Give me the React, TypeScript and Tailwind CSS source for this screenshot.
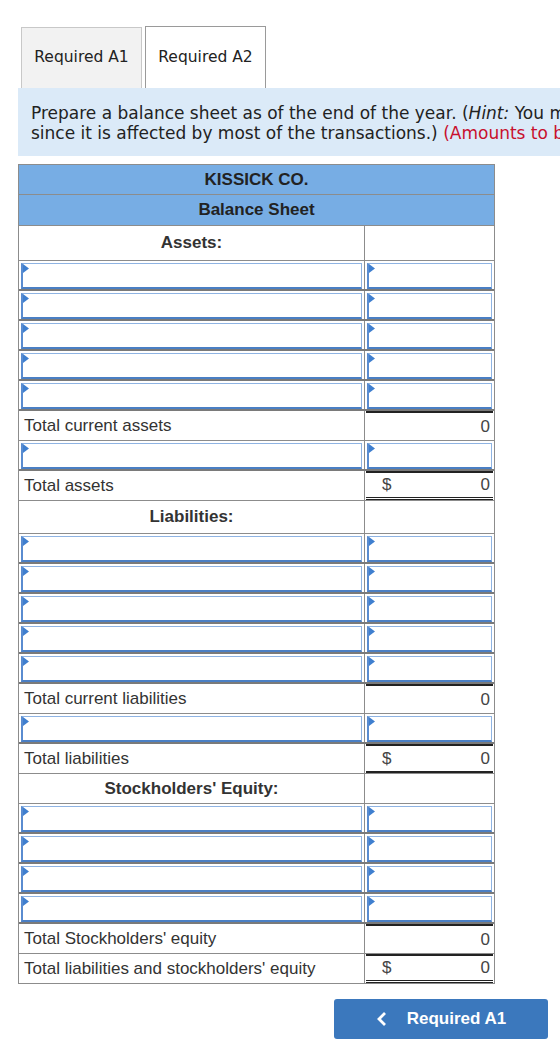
import React from "react";

type Row =
  | { kind: "section"; label: string; h: string }
  | { kind: "input" }
  | { kind: "total"; label: string; dollar?: boolean; top?: boolean; bottom?: "single" | "double" };

const rows: Row[] = [
  { kind: "section", label: "Assets:", h: "h-[35px]" },
  { kind: "input" },
  { kind: "input" },
  { kind: "input" },
  { kind: "input" },
  { kind: "input" },
  { kind: "total", label: "Total current assets", top: true },
  { kind: "input" },
  { kind: "total", label: "Total assets", dollar: true, top: true, bottom: "double" },
  { kind: "section", label: "Liabilities:", h: "h-[33px]" },
  { kind: "input" },
  { kind: "input" },
  { kind: "input" },
  { kind: "input" },
  { kind: "input" },
  { kind: "total", label: "Total current liabilities", top: true },
  { kind: "input" },
  { kind: "total", label: "Total liabilities", dollar: true, top: true, bottom: "single" },
  { kind: "section", label: "Stockholders' Equity:", h: "h-[30px]" },
  { kind: "input" },
  { kind: "input" },
  { kind: "input" },
  { kind: "input" },
  { kind: "total", label: "Total Stockholders' equity", top: true },
  { kind: "total", label: "Total liabilities and stockholders' equity", dollar: true, top: true, bottom: "double" },
];

function Flag() {
  return (
    <svg className="absolute left-0 top-0" width="6" height="9" viewBox="0 0 6 9">
      <path d="M0 0 L6 4.5 L0 9 Z" fill="#3f7fcf" />
    </svg>
  );
}

function InputBox() {
  return (
    <div className="relative h-full w-full border border-[#8fb4e3] border-b-2 border-b-[#4a7fc4] border-l-2 border-l-[#5a8cd0] bg-white">
      <Flag />
    </div>
  );
}

function TableRow({ row }: { row: Row }) {
  if (row.kind === "section") {
    return (
      <div className={`flex ${row.h} border-b border-[#8c8c8c]`}>
        <div className="flex w-[346px] items-center justify-center border-r border-[#8c8c8c] font-bold text-[17px] text-[#333]">
          {row.label}
        </div>
        <div className="flex-1" />
      </div>
    );
  }
  if (row.kind === "input") {
    return (
      <div className="flex h-[30px] border-b-2 border-[#7a7a7a]">
        <div className="w-[346px] border-r border-[#8c8c8c] p-[2px] pb-0">
          <InputBox />
        </div>
        <div className="flex-1 p-[2px] pb-0">
          <InputBox />
        </div>
      </div>
    );
  }
  const bottom =
    row.bottom === "double"
      ? "border-b-[3px] border-double border-b-[#222]"
      : row.bottom === "single"
      ? "border-b-2 border-b-[#222]"
      : "";
  return (
    <div className="flex h-[30px] border-b border-[#8c8c8c]">
      <div className="flex w-[346px] items-center border-r border-[#8c8c8c] px-[5px] text-[17px] text-[#333]">
        {row.label}
      </div>
      <div className="flex-1 px-[1px]">
        <div
          className={`flex h-full items-center justify-between pl-[16px] pr-[3px] text-[17px] text-[#444] ${
            row.top ? "border-t-2 border-t-[#222]" : ""
          } ${bottom}`}
        >
          <span>{row.dollar ? "$" : ""}</span>
          <span>0</span>
        </div>
      </div>
    </div>
  );
}

export default function App() {
  return (
    <div className="h-[1061px] w-[560px] overflow-hidden bg-white" style={{ fontFamily: '"Liberation Sans", Arial, sans-serif' }}>
      <div className="pl-[18px] pt-[26px]">
        {/* tabs */}
        <div className="flex items-end gap-[3px] pl-[3px]" style={{ fontFamily: '"DejaVu Sans", Verdana, sans-serif' }}>
          <div className="flex h-[61px] w-[121px] items-center justify-center border border-b-0 border-[#c8c8c8] bg-[#f2f2f2] text-[15.5px] text-[#222]">
            Required A1
          </div>
          <div className="flex h-[62px] w-[121px] items-center justify-center border border-b-0 border-[#9a9a9a] bg-white text-[15.5px] text-[#222]">
            Required A2
          </div>
        </div>

        {/* instructions */}
        <div
          className="w-[900px] bg-[#dbeaf8] pt-[15px] pb-[13px] pl-[13px] pr-4 text-[17px] leading-[20px] text-[#222] whitespace-nowrap"
          style={{ fontFamily: '"DejaVu Sans", Verdana, sans-serif' }}
        >
          <div>
            Prepare a balance sheet as of the end of the year. (<i>Hint:</i> You must determine the amount for Retained earnings as a plug figure,
          </div>
          <div>
            since it is affected by most of the transactions.){" "}
            <span className="text-[#c8102e]">(Amounts to be deducted should be indicated by a minus sign.)</span>
          </div>
        </div>

        {/* balance sheet */}
        <div className="mt-[8px] w-[477px] border-x border-t border-[#8c8c8c]">
          <div className="flex h-[30px] items-center justify-center border-b border-[#8c8c8c] bg-[#77ade4] text-[17px] font-bold text-[#222]">
            KISSICK CO.
          </div>
          <div className="flex h-[31px] items-center justify-center border-b border-[#8c8c8c] bg-[#77ade4] text-[17px] font-bold text-[#222]">
            Balance Sheet
          </div>
          {rows.map((r, i) => (
            <TableRow key={i} row={r} />
          ))}
        </div>

        {/* navigation */}
        <div className="mt-[15px] flex w-[530px] justify-end">
          <button className="flex h-[40px] w-[214px] items-center justify-center gap-[20px] rounded-[3px] bg-[#3b78bd] text-[17px] font-bold text-white">
            <svg width="11" height="16" viewBox="0 0 11 16">
              <path d="M9 2 L3 8 L9 14" fill="none" stroke="white" strokeWidth="2.8" />
            </svg>
            <span>Required A1</span>
          </button>
        </div>
      </div>
    </div>
  );
}
